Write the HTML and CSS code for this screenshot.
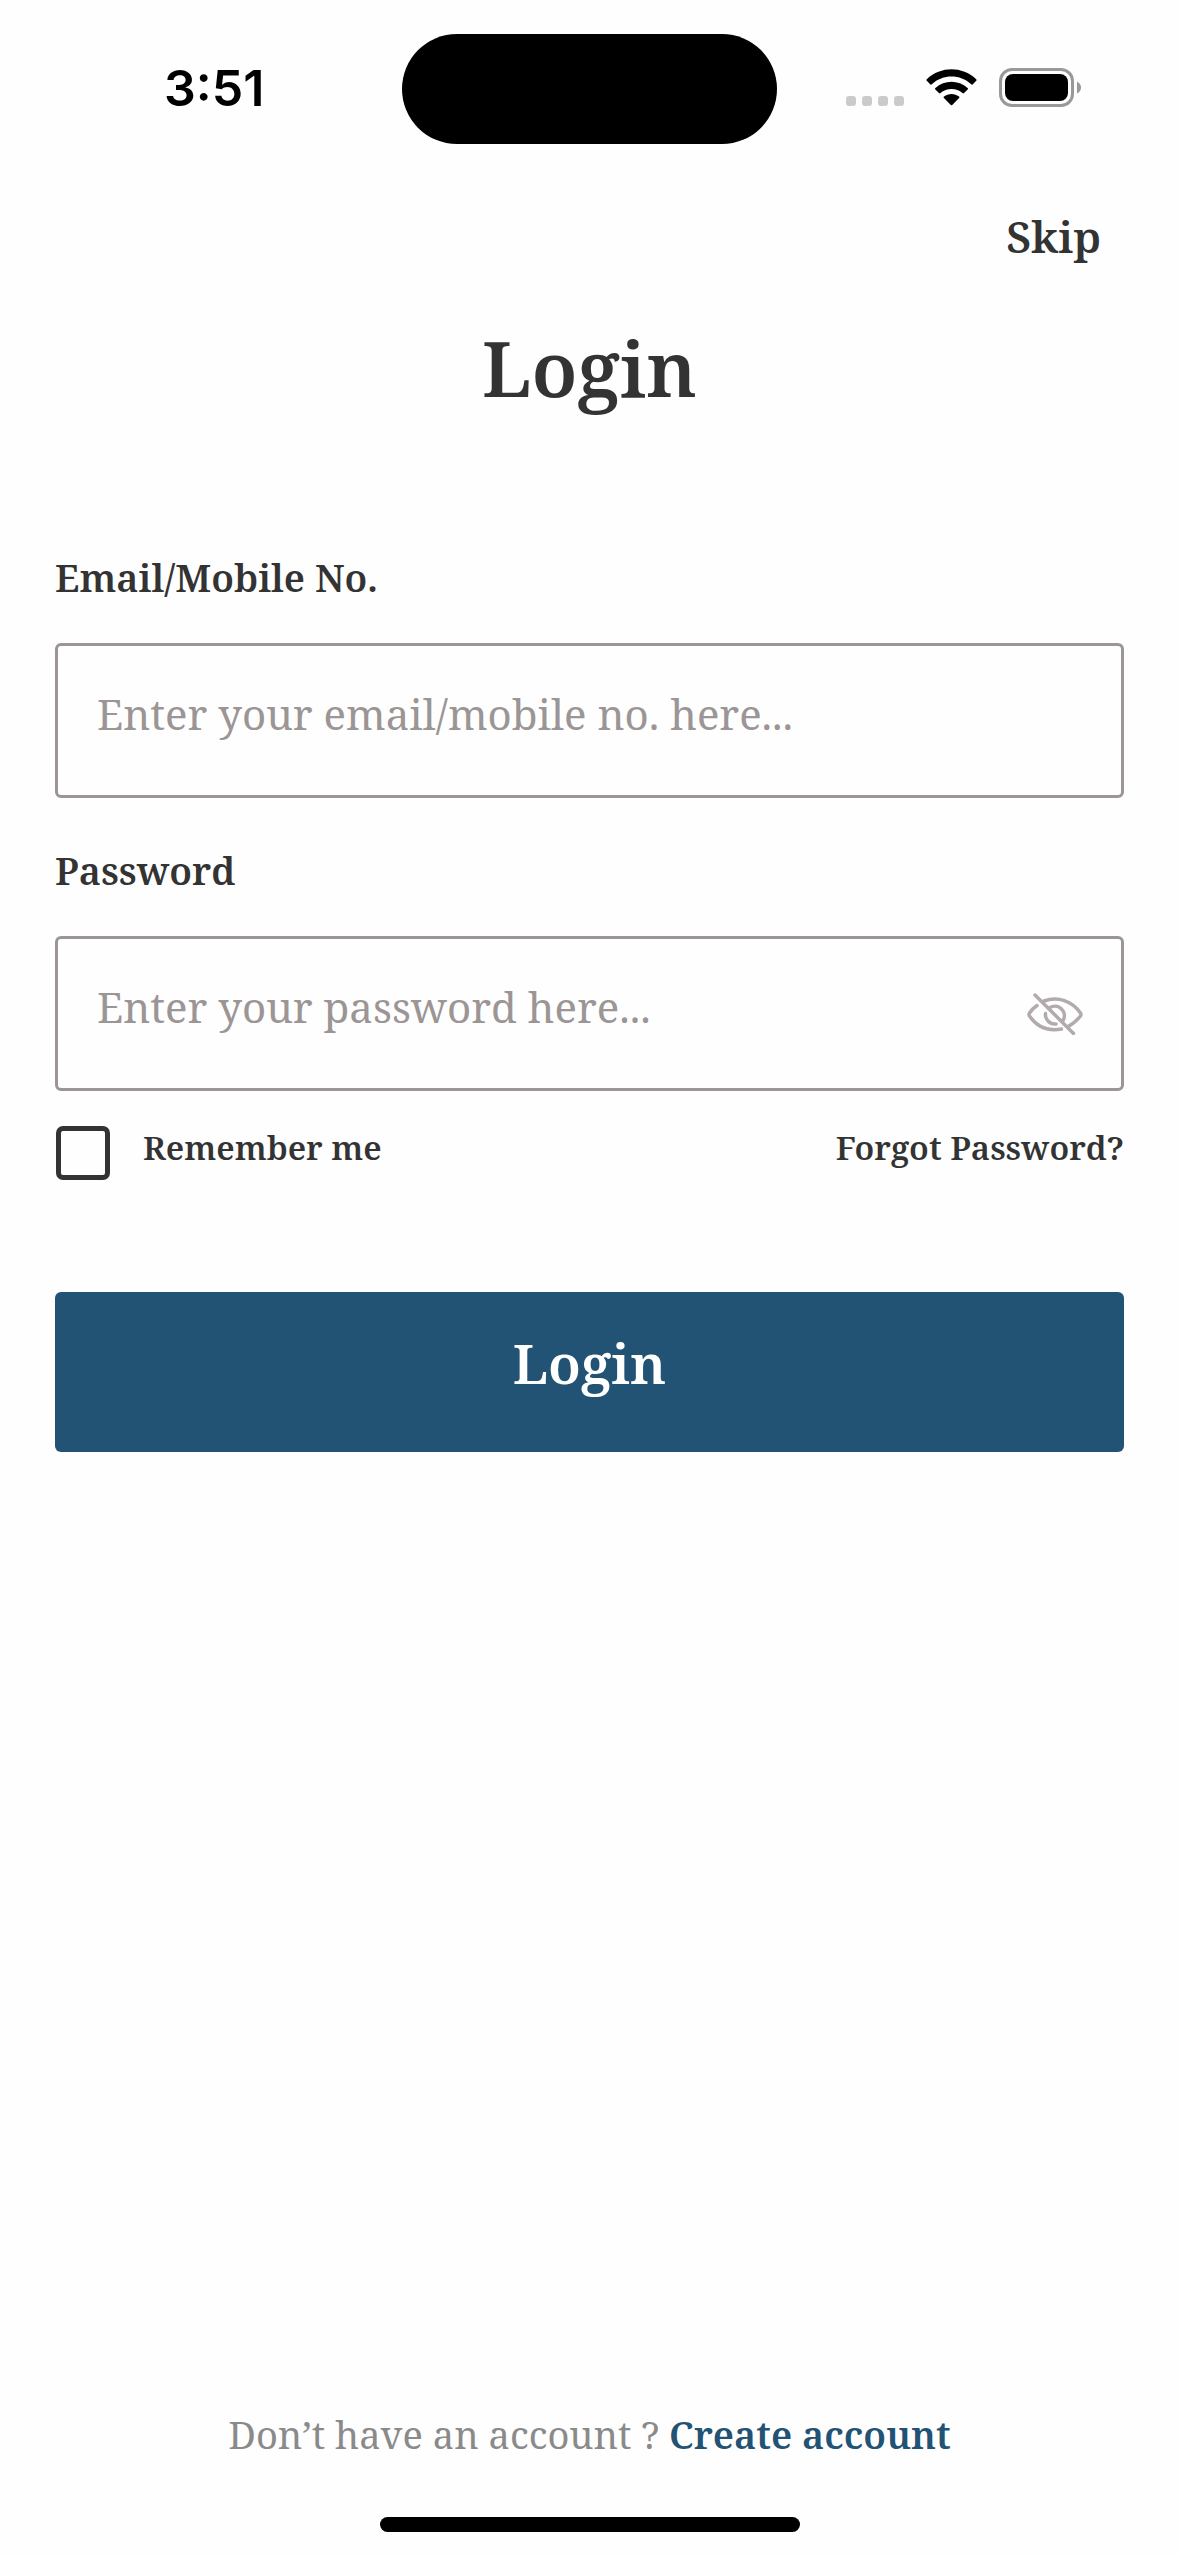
FILE: index.html
```html
<!DOCTYPE html>
<html lang="en">
<head>
<meta charset="utf-8">
<meta name="viewport" content="width=device-width, initial-scale=1">
<title>Login</title>
<link rel="stylesheet" href="styles.css">
</head>
<body>
<div class="screen">
  <header class="status">
    <span class="status-time">3:51</span>
    <span class="island"></span>
    <span class="status-icons">
      <svg class="dots" width="58" height="10" viewBox="0 0 58 10" fill="#cbcbcb" aria-hidden="true"><rect width="10" height="10" rx="3"/><rect x="16" width="10" height="10" rx="3"/><rect x="32" width="10" height="10" rx="3"/><rect x="48" width="10" height="10" rx="3"/></svg>
      <svg class="wifi" width="51" height="38" viewBox="0 0 51 38" aria-hidden="true"><path d="M.8 11.8Q0 11 .8 10.200C15-3 36-3 50.200 10.200Q51 11 50.200 11.800L46.600 15.400Q46 16 45.200 15.300C34 5 17 5 5.800 15.300Q5 16 4.400 15.400ZM9.300 20.400Q8.600 19.700 9.400 18.900C18.500 10.700 32.500 10.700 41.600 18.900Q42.400 19.700 41.700 20.400L38 24.100Q37.300 24.800 36.500 24.100C30.500 18.700 20.500 18.700 14.500 24.100Q13.700 24.800 13 24.100ZM17.900 29Q17.200 28.300 18 27.600C22.500 24 28.500 24 33 27.600Q33.800 28.300 33.100 29L26.200 36Q25.500 36.700 24.800 36Z"/></svg>
      <svg class="battery" width="82" height="39" viewBox="0 0 82 39" aria-hidden="true"><rect x="1.500" y="1.500" width="72" height="36" rx="11.500" fill="none" stroke="#999" stroke-width="3"/><rect x="6" y="6" width="63" height="27" rx="8"/><path d="M78 13.500Q82 15.500 82 19.500T78 25.500Z" fill="#999"/></svg>
    </span>
  </header>
  <main class="content">
    <nav class="top"><a class="skip" href="#">Skip</a></nav>
    <h1 class="title">Login</h1>
    <form class="form">
      <label class="label" for="user">Email/Mobile No.</label>
      <div class="field"><input class="input" id="user" type="text" placeholder="Enter your email/mobile no. here..."></div>
      <label class="label" for="pass">Password</label>
      <div class="field">
        <input class="input" id="pass" type="password" placeholder="Enter your password here...">
        <button class="eye" type="button" aria-label="Show password"><svg width="56" height="42" viewBox="0 0 56 42" fill="none" stroke="#b3abab" stroke-width="3.500" stroke-linecap="round" stroke-linejoin="round" aria-hidden="true"><path d="M8 2 46.500 40.500M10 12.500Q5.500 15.500 2.500 20Q1.500 21.500 2.500 23C10 34 21 38.500 34.500 36M17 8C31 3 45 8 53.500 20Q54.500 21.500 53.500 23Q48.500 29.500 40.500 34M23 14.500A9.500 9.500 0 0 1 36 27.500M18.500 20.500A9.500 9.500 0 0 0 29 31"/></svg></button>
      </div>
      <div class="options">
        <label class="remember"><input class="check" type="checkbox"><span>Remember me</span></label>
        <a class="forgot" href="#">Forgot Password?</a>
      </div>
      <button class="submit" type="submit">Login</button>
    </form>
  </main>
  <footer class="footer">
    <p class="signup">Don’t have an account ? <a class="create" href="#">Create account</a></p>
    <div class="home"></div>
  </footer>
</div>
</body>
</html>
```
FILE: styles.css
```css
* { box-sizing: border-box; }
body { margin: 0; background: #fefefe; color: #333; font-family: "Noto Serif", "DejaVu Serif Condensed", "Liberation Serif", serif; }
a { color: inherit; text-decoration: none; }
input, button { font-family: inherit; }
.screen { min-height: 100vh; display: flex; flex-direction: column; }

.status { display: grid; grid-template-columns: 1fr 375px 1fr; align-items: center; padding-top: 34px; }
.status-time { padding: 0 0 2px 164px; font: 600 50px/60px Inter, sans-serif; color: #000; }
.island { height: 110px; border-radius: 55px; background: #000; }
.status-icons { display: flex; justify-content: flex-end; align-items: flex-end; padding: 0 98px 4px 0; }
.dots { margin-right: 22px; margin-bottom: 1px; }
.wifi { margin-right: 22px; }

.content { padding: 0 55px; }
.top { display: flex; justify-content: flex-end; padding: 62px 23px 0 0; }
.skip { font-size: 44px; line-height: 60px; font-weight: 600; }
.title { margin: 52px 0 0; text-align: center; font-size: 77px; line-height: 100px; font-weight: 600; }

.form { display: flex; flex-direction: column; padding-top: 132px; }
.label { font-size: 38px; line-height: 54px; font-weight: 600; margin-bottom: 39px; }
.field { display: flex; align-items: center; height: 155px; margin-bottom: 45px; border: 3px solid #9b9595; border-radius: 6px; }
.input { flex: 1; min-width: 0; height: 100%; padding: 0 0 14px 39px; border: 0; outline: 0; background: none; font-size: 42px; color: #333; }
.input::placeholder { color: #9b9595; opacity: 1; }
.eye { display: flex; margin-right: 38px; padding: 0; border: 0; background: none; }
.options { display: flex; justify-content: space-between; font-size: 33px; line-height: 44px; font-weight: 600; margin-top: -10px; }
.remember { display: flex; gap: 33px; }
.check { appearance: none; width: 54px; height: 54px; margin: 0 0 0 1px; border: 5px solid #333; border-radius: 7px; }
.submit { height: 160px; margin-top: 112px; padding: 0 0 20px; border: 0; border-radius: 6px; background: #225274; color: #fff; font-size: 55px; font-weight: 600; }

.footer { margin-top: auto; display: flex; flex-direction: column; align-items: center; gap: 56px; padding-bottom: 24px; }
.signup { margin: 0; color: #8a8a8a; font-size: 38px; line-height: 54px; }
.create { color: #225274; font-weight: 600; }
.home { width: 420px; height: 15px; border-radius: 8px; background: #000; }
```
